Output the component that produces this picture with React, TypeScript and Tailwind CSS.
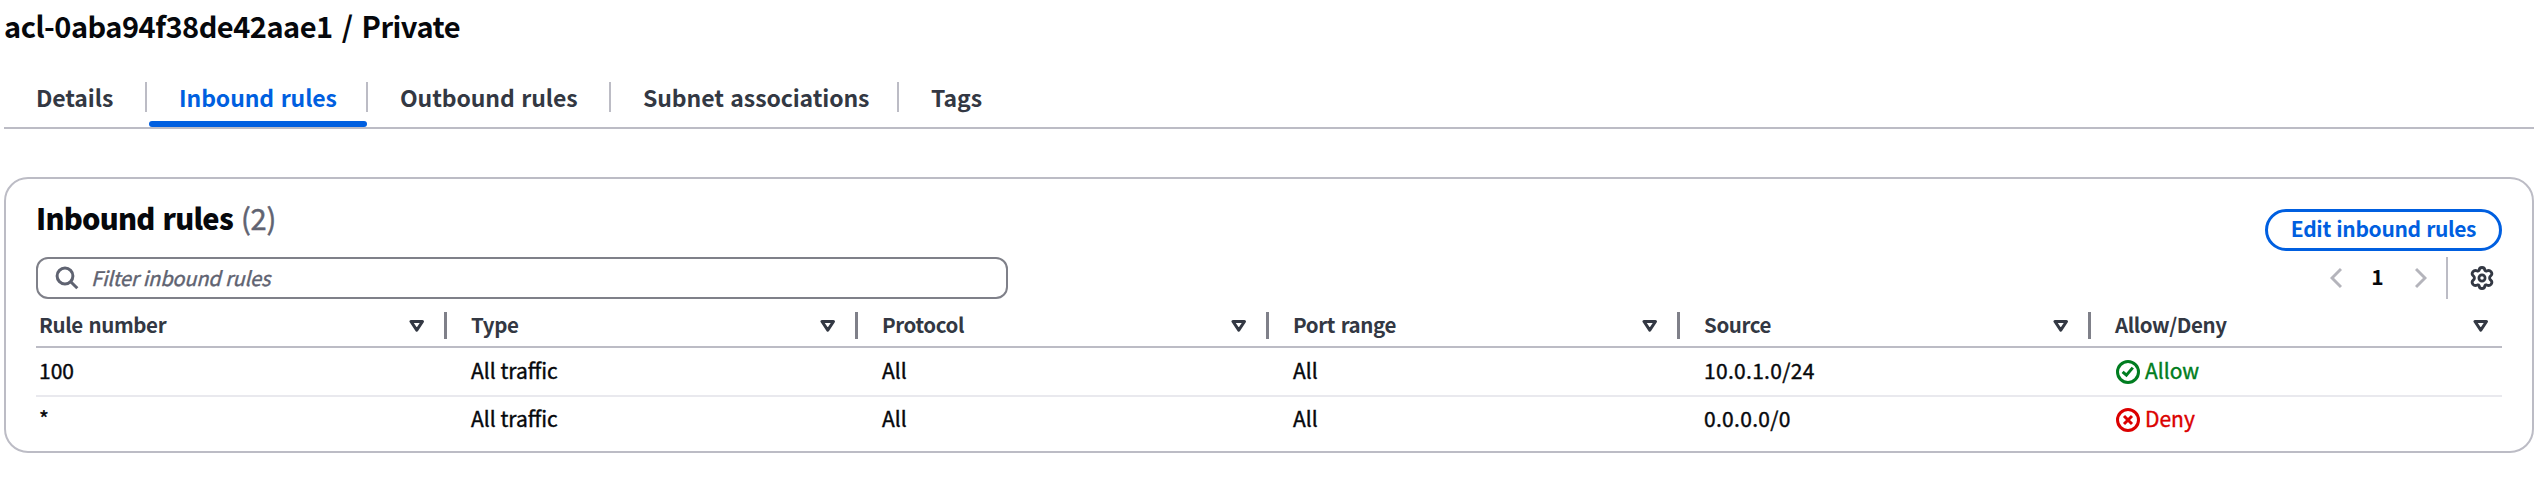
import type { ReactNode } from "react";

const tabs = [
  { label: "Details", width: "w-[143px]" },
  { label: "Inbound rules", width: "w-[221px]", active: true },
  { label: "Outbound rules", width: "w-[243px]" },
  { label: "Subnet associations", width: "w-[288px]" },
  { label: "Tags", width: "w-[120px]", last: true },
];

const columns = ["Rule number", "Type", "Protocol", "Port range", "Source", "Allow/Deny"];

const rows = [
  { number: "100", type: "All traffic", protocol: "All", ports: "All", source: "10.0.1.0/24", allow: true },
  { number: "*", type: "All traffic", protocol: "All", ports: "All", source: "0.0.0.0/0", allow: false },
];

function SearchIcon() {
  return (
    <svg className="size-6" viewBox="0 0 24 24" fill="none" stroke="#5f6371" strokeWidth="3">
      <circle cx="10" cy="10" r="7.9" />
      <path d="M15.5 15.5L22.3 22.3" />
    </svg>
  );
}

function SortIcon() {
  return (
    <svg className="h-3 w-4" viewBox="0 0 16 12" fill="none" stroke="#333843" strokeWidth="3" strokeLinejoin="round">
      <path d="M2 1.5H13.5L7.75 10.2Z" />
    </svg>
  );
}

function ChevronIcon({ flip }: { flip?: boolean }) {
  return (
    <svg className={flip ? "h-6 w-3 rotate-180" : "h-6 w-3"} viewBox="0 0 12 24" fill="none" stroke="#b4b4bb" strokeWidth="3">
      <path d="M11 3L2 12L11 21" />
    </svg>
  );
}

function GearIcon() {
  return (
    <svg className="size-6" viewBox="0 0 24 24" fill="none" stroke="#333843" strokeWidth="2.9" strokeLinejoin="round">
      <path d="M9.1 4.4 Q9.3 1.5 12 1.5 Q14.7 1.5 14.9 4.4 Q15.4 5.3 16.6 5 Q19.4 3.8 21 5.6 Q22.9 8.2 20.7 9.8 Q19.6 10.8 19.6 12 Q19.6 13.2 20.7 14.2 Q22.9 15.8 21 18.4 Q19.4 20.2 16.6 19 Q15.4 18.7 14.9 19.6 Q14.7 22.5 12 22.5 Q9.3 22.5 9.1 19.6 Q8.6 18.7 7.4 19 Q4.6 20.2 3 18.4 Q1.1 15.8 3.3 14.2 Q4.4 13.2 4.4 12 Q4.4 10.8 3.3 9.8 Q1.1 8.2 3 5.6 Q4.6 3.8 7.4 5 Q8.6 5.3 9.1 4.4Z" />
      <circle cx="12" cy="12" r="3.1" strokeWidth="2.7" />
    </svg>
  );
}

function Status({ allow }: { allow: boolean }) {
  return (
    <span className={allow ? "flex items-center gap-[5px] text-[#007d20]" : "flex items-center gap-[5px] text-[#db0000]"}>
      <svg className="mt-[2px] ml-px size-6" viewBox="0 0 24 24" fill="none" stroke="currentColor" strokeWidth="3">
        <circle cx="12" cy="12" r="10.5" />
        {allow ? <path d="M6.6 11.8L10.4 15.2L16.8 7.6" /> : <path d="M8 8L16 16M16 8L8 16" />}
      </svg>
      {allow ? "Allow" : "Deny"}
    </span>
  );
}

function Cell({ first, children }: { first?: boolean; children: ReactNode }) {
  return <div className={first ? "pl-[3px]" : "pl-6"}>{children}</div>;
}

export default function App() {
  return (
    <main className="h-[480px] w-[2540px] bg-white pr-1.5 pl-1 font-['Noto_Sans_CJK_SC','Noto_Sans',sans-serif] text-[21px] text-[#06080c]">
      <h1 className="pt-[7px] text-[29px] leading-9 font-bold tracking-[-0.5px] [word-spacing:3px]">acl-0aba94f38de42aae1 / Private</h1>

      <nav className="mt-[39px] flex h-[47px] border-b-2 border-[#bcbcc5] text-[23px] font-bold tracking-[-0.1px] text-[#333843] [word-spacing:1.5px]">
        {tabs.map((tab) => (
          <div key={tab.label} className={tab.width}>
            <div
              className={
                (tab.last ? "" : "border-r-2 border-[#bcbcc5] ") +
                (tab.active ? "text-[#005fe0] " : "") +
                "flex h-[30px] items-center pl-8 leading-[30px] whitespace-nowrap"
              }
            >
              {tab.label}
            </div>
            {tab.active && <div className="mt-[9px] mr-px ml-0.5 h-1.5 rounded-sm bg-[#005fe0]" />}
          </div>
        ))}
      </nav>

      <section className="mt-12 h-[276px] rounded-[24px] border-2 border-[#bcbcc5] px-[30px] pt-[30px]">
        <div className="flex h-[42px] items-start justify-between">
          <h2 className="flex h-[18px] items-center gap-2 text-[29px] font-black tracking-[-0.75px] [word-spacing:2px]">
            Inbound rules
            <span className="font-normal tracking-[-0.2px] text-[#5f6371] [-webkit-text-stroke:0.5px]">(2)</span>
          </h2>
          <button className="h-[42px] w-[237px] rounded-full border-[3px] border-[#005fe0] pb-[3px] text-center leading-[33px] font-bold tracking-[-0.35px] text-[#005fe0] [word-spacing:1px]">
            Edit inbound rules
          </button>
        </div>

        <div className="mt-1.5 flex h-[42px] items-center justify-between">
          <div className="flex h-full w-[972px] items-center gap-3 rounded-[12px] border-2 border-[#7f8089] pl-[17px] text-[#5f6371]">
            <SearchIcon />
            <span className="pb-px text-[20px] tracking-[-0.15px] italic [-webkit-text-stroke:0.4px]">Filter inbound rules</span>
          </div>
          <div className="flex h-full items-center">
            <ChevronIcon />
            <span className="w-[73px] pr-0.5 pb-[3px] text-center font-bold">1</span>
            <ChevronIcon flip />
            <div className="ml-[19px] h-full w-0.5 bg-[#bcbcc5]" />
            <div className="mr-2 ml-[22px]">
              <GearIcon />
            </div>
          </div>
        </div>

        <div className="grid h-[49px] grid-cols-6 items-center border-b-2 border-[#bcbcc5] pt-[6px] text-[20.5px] font-bold tracking-[-0.4px] text-[#333843] [word-spacing:1.5px]">
          {columns.map((name, i) => (
            <div
              key={name}
              className={
                (i === 0 ? "pl-[3px] " : "pl-6 ") +
                (i < 5 ? "border-r-[3px] border-[#7f8089] pr-[19px] " : "pr-[13px] ") +
                "flex h-[27px] items-center justify-between"
              }
            >
              <span className="pb-[2px]">{name}</span>
              <SortIcon />
            </div>
          ))}
        </div>

        {rows.map((row, i) => (
          <div
            key={row.number}
            className={
              (i === 0 ? "h-[49px] border-b-2 border-[#e9e9ee] pb-px " : "h-[45px] pb-[2px] ") +
              "grid grid-cols-6 items-center [-webkit-text-stroke:0.4px]"
            }
          >
            <Cell first>{row.number}</Cell>
            <Cell>{row.type}</Cell>
            <Cell>{row.protocol}</Cell>
            <Cell>{row.ports}</Cell>
            <Cell>
              <span className="tracking-[0.3px]">{row.source}</span>
            </Cell>
            <Cell>
              <Status allow={row.allow} />
            </Cell>
          </div>
        ))}
      </section>
    </main>
  );
}
